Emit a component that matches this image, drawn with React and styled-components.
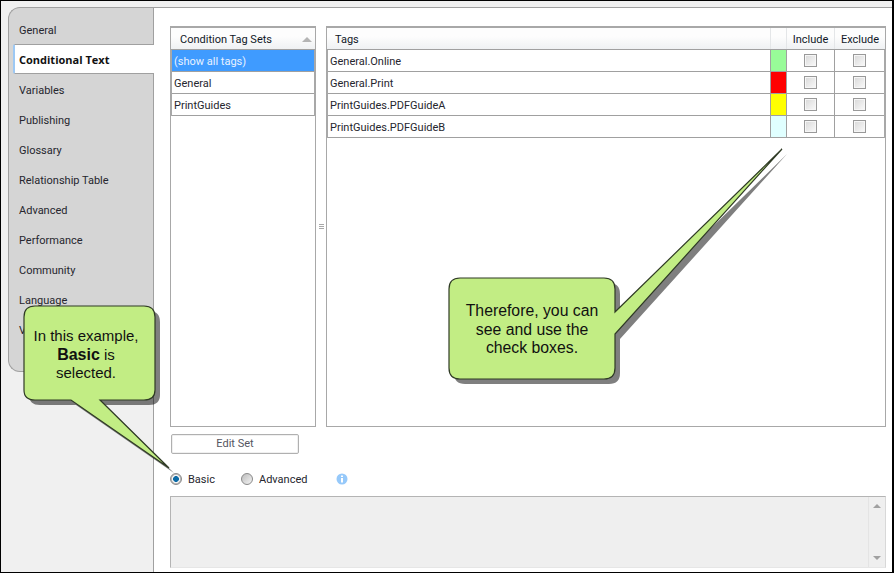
import React from "react";
import styled, { createGlobalStyle } from "styled-components";

const GlobalStyle = createGlobalStyle`
  html, body { margin: 0; padding: 0; background: #fff; }
  * { box-sizing: border-box; }
`;

const Page = styled.div`
  position: relative;
  width: 894px;
  height: 573px;
  display: flex;
  background: #f0f0f0;
  border: solid #000;
  border-width: 1px 2px 1px 1px;
  overflow: hidden;
  font-family: Roboto, "Open Sans", sans-serif;
  font-size: 11px;
  color: #26262e;
`;

const Sidebar = styled.div`
  width: 153px;
  flex: none;
  margin-top: 6px;
  padding-left: 7px;
  background: #f0f0f0;
  border-right: 1px solid #a0a0a0;
`;

const TabPanel = styled.div`
  width: 145px;
  height: 365px;
  padding-top: 6px;
  background: #d5d5d5;
  border: 1px solid #a0a0a0;
  border-right: none;
  border-radius: 12px 0 0 12px;
`;

const Tab = styled.div`
  height: 30px;
  display: flex;
  align-items: center;
  margin-left: ${(p) => (p.$active ? "4px" : "0")};
  padding: ${(p) => (p.$active ? "0 0 0 4px" : "2px 0 0 10px")};
  ${(p) =>
    p.$active &&
    `
    position: relative;
    width: 141px;
    background: #fff;
    font-family: "Open Sans", sans-serif;
    font-weight: 700;
    color: #111;
    border-top: 1px solid #a0a0a0;
    border-bottom: 1px solid #a0a0a0;
    border-left: 2px solid #9cc8f4;
    border-radius: 2px 0 0 2px;
  `}
`;

const Main = styled.div`
  flex: 1;
  margin-top: 6px;
  padding: 18px 6px 3px 16px;
  display: flex;
  flex-direction: column;
  background: #fff;
  border-top: 1px solid #a0a0a0;
`;

const Panes = styled.div`
  display: flex;
  height: 401px;
`;

const Pane = styled.div`
  width: ${(p) => p.$width}px;
  flex: none;
  border: 1px solid #a8a8a8;
  border-top-width: 2px;
`;

const RowGroup = styled.div`
  border-left: 1px solid #a8a8a8;
  border-right: 1px solid #a8a8a8;
`;

const Splitter = styled.div`
  width: 10px;
  flex: none;
  display: flex;
  align-items: center;
  justify-content: center;
`;

const HeaderRow = styled.div`
  display: flex;
  height: 22px;
  background: linear-gradient(#fdfdfd 0 40%, #eff1f3 100%);
  border-bottom: 1px solid #a0a0a0;
`;

const HeaderCell = styled.div`
  display: flex;
  align-items: center;
  justify-content: ${(p) => (p.$center ? "center" : "flex-start")};
  width: ${(p) => (p.$width ? `${p.$width}px` : "auto")};
  flex: ${(p) => (p.$width ? "none" : 1)};
  padding: 2px 0 0 ${(p) => p.$pad || 0}px;
  border-right: ${(p) => (p.$last ? "none" : "1px solid #e4e6e8")};
  color: #111827;
`;

const SortArrow = styled.span`
  margin-left: auto;
  margin-right: 3px;
  width: 0;
  height: 0;
  border-left: 5px solid transparent;
  border-right: 5px solid transparent;
  border-bottom: 5px solid #b4b4b4;
`;

const SetRow = styled.div`
  height: 22px;
  display: flex;
  align-items: center;
  padding: 1px 0 0 2px;
  background: ${(p) => (p.$selected ? "#3f9bff" : "#fff")};
  color: ${(p) => (p.$selected ? "#e8f2ff" : "#26262e")};
  border-bottom: 1px solid #a0a0a0;
`;

const TagRow = styled.div`
  display: flex;
  height: 22px;
  border-bottom: 1px solid #a0a0a0;
`;

const TagName = styled.div`
  flex: 1;
  display: flex;
  align-items: center;
  padding: 1px 0 0 2px;
`;

const Swatch = styled.div`
  width: 17px;
  flex: none;
  background: ${(p) => p.$color};
  border-left: 1px solid #a0a0a0;
  border-right: 1px solid #a0a0a0;
`;

const CheckCell = styled.div`
  width: ${(p) => p.$width}px;
  flex: none;
  display: flex;
  align-items: center;
  justify-content: center;
  border-right: ${(p) => (p.$last ? "none" : "1px solid #a0a0a0")};
`;

const CheckBox = styled.span`
  width: 13px;
  height: 13px;
  border: 1px solid #999;
  background: linear-gradient(135deg, #d8d8d8, #fafafa);
  box-shadow: inset 0 0 0 1px #f6f6f6;
`;

const EditButton = styled.button`
  width: 128px;
  height: 20px;
  margin: 7px 0 0 1px;
  padding: 0 0 2px;
  background: #fff;
  border: 1px solid #b0b0b0;
  border-radius: 2px;
  box-shadow: inset 0 0 0 1px #f0f0f0;
  font: inherit;
  color: #55555f;
`;

const RadioRow = styled.div`
  display: flex;
  align-items: center;
  height: 16px;
  margin-top: 17px;
`;

const RadioItem = styled.label`
  display: flex;
  align-items: center;
  gap: 6px;
  margin-right: ${(p) => p.$gap}px;
`;

const RadioDot = styled.span`
  width: 12px;
  height: 12px;
  border-radius: 50%;
  border: 1px solid #8a8a8a;
  background: ${(p) =>
    p.$on
      ? "radial-gradient(circle, #0b6aa6 0 2.6px, #f4f4f4 3.2px 3.8px, #bdbdbd 4.4px)"
      : "linear-gradient(135deg, #bcbcbc, #f4f4f4)"};
`;

const DescBox = styled.div`
  height: 72px;
  margin-top: 9px;
  display: flex;
  justify-content: flex-end;
  background: #efefef;
  border: 1px solid #b4b4b4;
  border-bottom-color: #e6e6e6;
  border-right-color: #d8d8d8;
`;

const ScrollBar = styled.div`
  width: 17px;
  display: flex;
  flex-direction: column;
  justify-content: space-between;
  align-items: center;
  padding: 7px 0;
  border-left: 1px solid #e4e4e4;
`;

const Arrow = styled.span`
  width: 0;
  height: 0;
  border-left: 4px solid transparent;
  border-right: 4px solid transparent;
  ${(p) => (p.$up ? "border-bottom" : "border-top")}: 4px solid #a0a0a0;
`;

const CalloutSvg = styled.svg`
  position: absolute;
  left: 0;
  top: 0;
  pointer-events: none;
`;

const CalloutText = styled.div`
  position: absolute;
  left: ${(p) => p.$left}px;
  top: ${(p) => p.$top}px;
  width: ${(p) => p.$width}px;
  text-align: center;
  font-family: "Liberation Sans", Arial, sans-serif;
  font-size: ${(p) => p.$size}px;
  line-height: 18.5px;
  color: #111;

  b {
    font-size: 16px;
  }
`;

const tabs = [
  "General",
  "Conditional Text",
  "Variables",
  "Publishing",
  "Glossary",
  "Relationship Table",
  "Advanced",
  "Performance",
  "Community",
  "Language",
  "Views",
];

const sets = ["(show all tags)", "General", "PrintGuides"];

const tags = [
  { name: "General.Online", color: "#98fb98" },
  { name: "General.Print", color: "#ff0000" },
  { name: "PrintGuides.PDFGuideA", color: "#ffff00" },
  { name: "PrintGuides.PDFGuideB", color: "#e0ffff" },
];

// outlines are in page coordinates, page border is 1px so svg sits at -1
const leftBubble =
  "M35 306 H144 Q155 306 155 317 V390 Q155 400 144 400 H100 L169 468 L71 400 H35 Q24 400 24 390 V317 Q24 306 35 306 Z";
const rightBubble =
  "M460 278 H604 Q615 278 615 289 V312 L782 149 L615 334 V368 Q615 379 604 379 H460 Q449 379 449 368 V289 Q449 278 460 278 Z";

const Bubble = ({ d }) => (
  <>
    <path d={d} fill="#000" opacity="0.5" transform="translate(5 5)" />
    <path d={d} fill="#c2ed84" stroke="#2f3a25" strokeWidth="1.2" />
  </>
);

const App = () => {
  return (
    <Page>
      <GlobalStyle />
      <Sidebar>
        <TabPanel>
          {tabs.map((t) => (
            <Tab key={t} $active={t === "Conditional Text"}>
              {t}
            </Tab>
          ))}
        </TabPanel>
      </Sidebar>
      <Main>
        <Panes>
          <Pane $width={146}>
            <HeaderRow>
              <HeaderCell $last $pad={9}>
                Condition Tag Sets
                <SortArrow />
              </HeaderCell>
            </HeaderRow>
            <RowGroup>
              {sets.map((s, i) => (
                <SetRow key={s} $selected={i === 0}>
                  {s}
                </SetRow>
              ))}
            </RowGroup>
          </Pane>
          <Splitter>
            <svg width="5" height="6" viewBox="0 0 5 6">
              <path d="M0 .5h5M0 2.5h5M0 4.5h5" stroke="#a8a8a8" />
            </svg>
          </Splitter>
          <Pane $width={560}>
            <HeaderRow>
              <HeaderCell $pad={8}>Tags</HeaderCell>
              <HeaderCell $width={16} $center />
              <HeaderCell $width={48} $center>
                Include
              </HeaderCell>
              <HeaderCell $width={50} $center $last>
                Exclude
              </HeaderCell>
            </HeaderRow>
            <RowGroup>
              {tags.map((t) => (
                <TagRow key={t.name}>
                  <TagName>{t.name}</TagName>
                  <Swatch $color={t.color} />
                  <CheckCell $width={48}>
                    <CheckBox />
                  </CheckCell>
                  <CheckCell $width={49} $last>
                    <CheckBox />
                  </CheckCell>
                </TagRow>
              ))}
            </RowGroup>
          </Pane>
        </Panes>
        <EditButton>Edit Set</EditButton>
        <RadioRow>
          <RadioItem $gap={26}>
            <RadioDot $on />
            Basic
          </RadioItem>
          <RadioItem $gap={29}>
            <RadioDot />
            Advanced
          </RadioItem>
          <svg width="12" height="12" viewBox="0 0 12 12">
            <circle cx="6" cy="6" r="5.5" fill="#96c9fa" />
            <rect x="5" y="5" width="2" height="4.5" fill="#fff" />
            <rect x="5" y="2.5" width="2" height="1.5" fill="#fff" />
          </svg>
        </RadioRow>
        <DescBox>
          <ScrollBar>
            <Arrow $up />
            <Arrow />
          </ScrollBar>
        </DescBox>
      </Main>
      <CalloutSvg width="894" height="573" viewBox="1 1 894 573">
        <Bubble d={leftBubble} />
        <Bubble d={rightBubble} />
      </CalloutSvg>
      <CalloutText $left={20} $top={326} $width={130} $size={15}>
        In this example,
        <br />
        <b>Basic</b> is
        <br />
        selected.
      </CalloutText>
      <CalloutText $left={450} $top={301} $width={162} $size={15.8}>
        Therefore, you can
        <br />
        see and use the
        <br />
        check boxes.
      </CalloutText>
    </Page>
  );
};

export default App;
